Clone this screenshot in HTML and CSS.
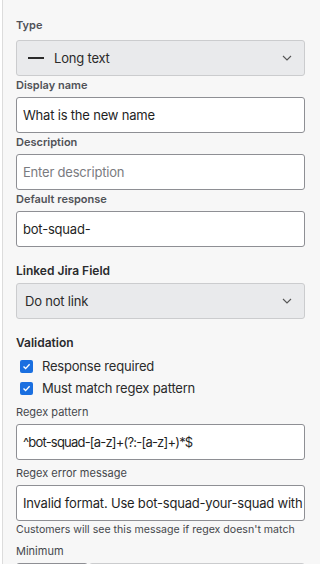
FILE: index.html
```html
<!DOCTYPE html>
<html lang="en">
<head>
    <meta charset="UTF-8">
    <meta name="viewport" content="width=device-width, initial-scale=1.0">
    <title>Field settings</title>
    <link rel="stylesheet" href="styles.css">
</head>
<body>

<div class="panel">
    <!-- Field type -->
    <div class="type-label">Type</div>
    <div class="select">
        <span class="dash"></span>
        <span class="select-text">Long text</span>
        <svg class="chevron" width="10" height="6" viewBox="0 0 10 6"><path d="M1 1 L5 5 L9 1" fill="none" stroke="#555" stroke-width="1.1"/></svg>
    </div>

    <div class="field-label">Display name</div>
    <div class="input">What is the new name</div>

    <div class="field-label">Description</div>
    <div class="input placeholder">Enter description</div>

    <div class="field-label">Default response</div>
    <div class="input">bot-squad-</div>

    <!-- Jira -->
    <div class="section-label">Linked Jira Field</div>
    <div class="select">
        <span class="select-text plain">Do not link</span>
        <svg class="chevron" width="10" height="6" viewBox="0 0 10 6"><path d="M1 1 L5 5 L9 1" fill="none" stroke="#555" stroke-width="1.1"/></svg>
    </div>

    <!-- Validation -->
    <div class="section-label">Validation</div>
    <div class="checks">
        <label class="check">
            <span class="box"><svg width="9" height="9" viewBox="0 0 9 9"><path d="M1.5 4.6 L3.6 6.6 L7.6 2.2" fill="none" stroke="#fff" stroke-width="1.4"/></svg></span>
            Response required
        </label>
        <label class="check">
            <span class="box"><svg width="9" height="9" viewBox="0 0 9 9"><path d="M1.5 4.6 L3.6 6.6 L7.6 2.2" fill="none" stroke="#fff" stroke-width="1.4"/></svg></span>
            Must match regex pattern
        </label>
    </div>

    <div class="sub-label">Regex pattern</div>
    <div class="input regex">^bot-squad-[a-z]+(?:-[a-z]+)*$</div>

    <div class="sub-label">Regex error message</div>
    <div class="input">Invalid format. Use bot-squad-your-squad with lowercase letters</div>
    <div class="help">Customers will see this message if regex doesn't match</div>

    <div class="sub-label minimum">Minimum</div>
    <div class="min-row">
        <div class="min-value"></div>
        <div class="min-unit"></div>
    </div>
</div>

</body>
</html>
```

FILE: styles.css
```css
body {
    margin: 0;
    background-color: #fff;
    font-family: Inter, 'Noto Sans', sans-serif;
    color: #1f1f1f;
    overflow: hidden;
}
.panel {
    margin-left: 2px;
    border-left: 1px solid #dcdcdc;
    background-color: #f7f7f7;
    padding: 19px 15px 0 13px;
    min-height: 600px;
}
.type-label {
    font-size: 11px;
    line-height: 13px;
    font-weight: 600;
    color: #505257;
    margin-bottom: 8px;
}
.field-label {
    font-size: 11px;
    line-height: 13px;
    font-weight: 600;
    color: #505257;
    margin: 3px 0 5px;
}
.section-label {
    font-size: 12px;
    line-height: 15px;
    font-weight: 600;
    color: #2a2b2e;
    margin: 16px 0 5px;
}
.sub-label {
    font-size: 11px;
    line-height: 13px;
    color: #45474c;
    margin: 7px 0 5px;
}
.select {
    height: 36px;
    box-sizing: border-box;
    display: flex;
    align-items: center;
    background-color: #e9eaec;
    border: 1px solid #cbccce;
    border-radius: 3px;
    padding: 0 12px 0 11px;
}
.dash {
    width: 16px;
    height: 2px;
    background-color: #2b2b2b;
    margin-right: 10px;
}
.select-text {
    flex: 1;
    font-size: 13px;
    letter-spacing: -0.2px;
    color: #2b2b2b;
}
.select-text.plain {
    margin-left: -3px;
}
.chevron {
    display: block;
}
.input {
    height: 36px;
    box-sizing: border-box;
    background-color: #fff;
    border: 1px solid #8e8f94;
    border-radius: 3px;
    padding: 0 6px;
    display: flex;
    align-items: center;
    font-size: 13px;
    letter-spacing: -0.2px;
    color: #1f1f1f;
    white-space: nowrap;
    overflow: hidden;
}
.input.regex {
    letter-spacing: -0.8px;
}
.input.placeholder {
    color: #7a7b80;
}
.checks {
    margin-top: 5px;
}
.check {
    display: flex;
    align-items: center;
    height: 22px;
    font-size: 13px;
    letter-spacing: -0.2px;
    color: #2b2b2b;
    padding-left: 4px;
}
.box {
    width: 13px;
    height: 13px;
    border-radius: 2px;
    background-color: #1a6fe0;
    display: flex;
    align-items: center;
    justify-content: center;
    margin-right: 9px;
}
.box svg {
    display: block;
}
.help {
    font-size: 10.6px;
    line-height: 13px;
    color: #45474c;
    margin-top: 2px;
    white-space: nowrap;
}
.minimum {
    margin-top: 9px;
}
.min-row {
    display: flex;
    gap: 1px;
}
.min-value {
    width: 72px;
    height: 36px;
    box-sizing: border-box;
    border: 1px solid #8e8f94;
    border-radius: 3px;
    background-color: #fff;
}
.min-unit {
    flex: 1;
    height: 36px;
    box-sizing: border-box;
    border: 1px solid #cbccce;
    border-radius: 3px;
    background-color: #e9eaec;
}
```
